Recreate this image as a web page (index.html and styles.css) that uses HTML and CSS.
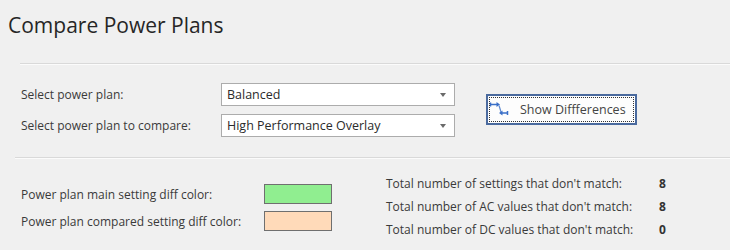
FILE: index.html
```html
<!DOCTYPE html>
<html lang="en">
<head>
    <meta charset="UTF-8">
    <title>Compare Power Plans</title>
    <link rel="stylesheet" href="styles.css">
</head>
<body>
    <div class="page">
        <h1 class="title">Compare Power Plans</h1>
        <div class="separator first"></div>

        <div class="plans">
            <div class="plan-rows">
                <div class="row">
                    <span class="label">Select power plan:</span>
                    <div class="combo"><span>Balanced</span><span class="arrow"></span></div>
                </div>
                <div class="row">
                    <span class="label">Select power plan to compare:</span>
                    <div class="combo"><span>High Performance Overlay</span><span class="arrow"></span></div>
                </div>
            </div>
            <button class="btn">
                <svg class="btn-icon" width="20" height="16" viewBox="0 0 20 16">
                    <path d="M1.5 2.5V6.5M1.5 4.5H8" stroke="#3a6fc8" stroke-width="1.5" fill="none"/>
                    <path d="M7.5 2L11 4.5L7.5 7Z" fill="#3a6fc8"/>
                    <path d="M10 5.5L12 12" stroke="#5f8ad0" stroke-width="1.2" fill="none"/>
                    <path d="M18.5 11V15M18.5 13H13" stroke="#3a6fc8" stroke-width="1.5" fill="none"/>
                    <path d="M13.5 10.5L10 13L13.5 15.5Z" fill="#3a6fc8"/>
                </svg>
                <span class="btn-text">Show Diffferences</span>
            </button>
        </div>

        <div class="separator second"></div>

        <div class="colors">
            <div class="color-rows">
                <div class="row">
                    <span class="label">Power plan main setting diff color:</span>
                    <span class="swatch main"></span>
                </div>
                <div class="row">
                    <span class="label">Power plan compared setting diff color:</span>
                    <span class="swatch compared"></span>
                </div>
            </div>
            <div class="totals">
                <div class="total"><span class="label">Total number of settings that don't match:</span><b>8</b></div>
                <div class="total"><span class="label">Total number of AC values that don't match:</span><b>8</b></div>
                <div class="total"><span class="label">Total number of DC values that don't match:</span><b>0</b></div>
            </div>
        </div>
    </div>
</body>
</html>
```

FILE: styles.css
```css
* {
    margin: 0;
    padding: 0;
    box-sizing: border-box;
}

body {
    background-color: #f0f0f0;
    color: #3a3a3a;
    font-family: "Open Sans", "Noto Sans", sans-serif;
    font-size: 12px;
}

.page {
    width: 730px;
    height: 250px;
    overflow: hidden;
}

.title {
    font-size: 21px;
    font-weight: 400;
    color: #262626;
    line-height: 28px;
    padding: 11px 0 0 8px;
    height: 63px;
}

.separator {
    height: 2px;
    border-top: 1px solid #d9d9d9;
    border-bottom: 1px solid #fbfbfb;
}

.separator.first {
    margin-left: 20px;
}

.separator.second {
    margin-left: 15px;
}

.plans {
    display: flex;
    align-items: flex-start;
    height: 92px;
    padding-left: 21px;
    padding-top: 18px;
}

.plan-rows {
    display: flex;
    flex-direction: column;
    gap: 8px;
}

.row {
    display: flex;
    align-items: center;
}

.plans .label {
    width: 200px;
}

.combo {
    width: 234px;
    height: 23px;
    background: #fff;
    border: 1px solid #acacac;
    display: flex;
    align-items: center;
    justify-content: space-between;
    padding: 0 8px 0 5px;
    color: #2b2b2b;
    font-size: 12.5px;
}

.arrow {
    width: 0;
    height: 0;
    border-left: 3.5px solid transparent;
    border-right: 3.5px solid transparent;
    border-top: 4px solid #6a6a6a;
}

.btn {
    margin-left: 31px;
    margin-top: 11px;
    width: 151px;
    height: 31px;
    background: #fdfdfd;
    border: 2px solid #4a6a9e;
    outline: 1px dotted #333;
    outline-offset: -4px;
    display: flex;
    align-items: center;
    padding-left: 1px;
    font-family: "Open Sans", "Noto Sans", sans-serif;
    font-size: 12.5px;
    color: #444;
}

.btn-icon {
    margin-top: -4px;
}

.btn-text {
    margin-left: 11px;
}

.colors {
    display: flex;
    padding-left: 21px;
}

.color-rows {
    display: flex;
    flex-direction: column;
    gap: 7px;
    padding-top: 25px;
}

.color-rows .label {
    width: 243px;
}

.swatch {
    width: 68px;
    height: 20px;
    border: 1px solid #6f6f6f;
}

.swatch.main {
    background: #90ee90;
}

.swatch.compared {
    background: #ffdab9;
}

.totals {
    margin-left: 54px;
    padding-top: 16px;
    display: flex;
    flex-direction: column;
    gap: 6px;
}

.total {
    display: flex;
    height: 17px;
    align-items: center;
}

.total .label {
    width: 273px;
}

.total b {
    font-weight: 700;
    color: #333;
}
```
